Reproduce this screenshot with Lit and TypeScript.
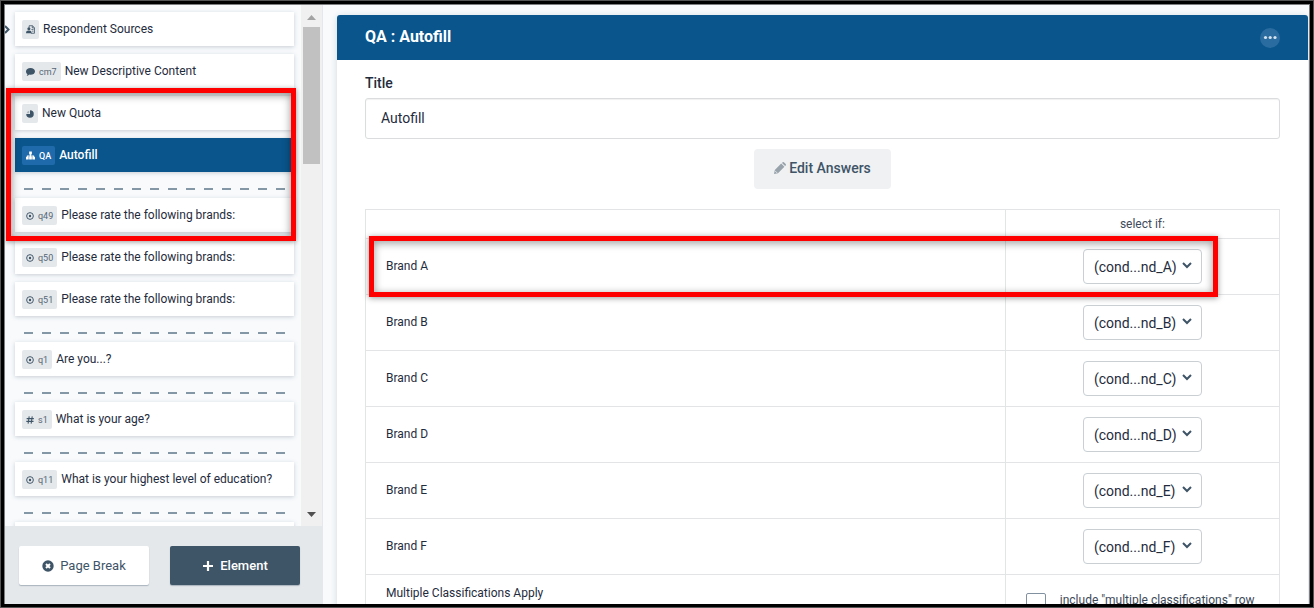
import { LitElement, html, css, svg, nothing } from "lit";
import { customElement } from "lit/decorators.js";

const icons: Record<string, unknown> = {
  sources: svg`<path fill="none" stroke="currentColor" stroke-width=".9" d="M3.500 3V.8h3.700l2.200 2.200v6.200H5.500M7 1v2.200h2.300"/><circle cx="3.200" cy="4.200" r="1.700"/><path d="M0 9.200c0-2.300 1-3 3.200-3s3 .7 3 3z"/><path d="M6 4.500h2.300v.9H6zM6.800 6.300h1.500v.9H6.800z"/>`,
  comment: svg`<path d="M5 1.200c2.800 0 5 1.600 5 3.700S7.800 8.600 5 8.600c-.5 0-1 0-1.400-.2C2.800 9.200 1.800 9.800.7 9.800c.6-.6.9-1.200.9-1.900C.6 7.200 0 6 0 4.900c0-2.100 2.200-3.700 5-3.700z"/>`,
  pie: svg`<path d="M5 5V.3A4.700 4.700 0 1 1 .3 5z"/><path d="M4 4V.9A4 4 0 0 0 .9 4z" opacity=".35"/>`,
  tree: svg`<path d="M3.500 .5h3v3.300h-1v1.200h3.500v1.500h1v3h-3v-3h.7V6H5.500v.5h1v3h-3v-3h1V6H2.200v.5H3v3H0v-3h1V5h3.500V3.800h-1z"/>`,
  target: svg`<circle cx="5" cy="5" r="4.200" fill="none" stroke="currentColor" stroke-width="1.200"/><circle cx="5" cy="5" r="1.500"/>`,
  hash: svg`<path fill="none" stroke="currentColor" stroke-width="1.300" d="M4 .5L2.600 9.500M7.800 .5L6.400 9.500M.8 3.300h9M.4 6.700h9"/>`,
};

const wideIcons = ["sources", "comment", "tree"];

interface Item {
  icon: string;
  code?: string;
  text: string;
  active?: boolean;
}

const pageBreak = html`<li class="break" role="separator"></li>`;

const card = (i: Item) => html`
  <li class="card ${i.active ? "active" : ""}">
    <span class="badge"
      ><svg class="ico ${wideIcons.includes(i.icon) ? "big" : ""}" viewBox="0 0 10 10" aria-hidden="true">
        ${icons[i.icon]}</svg
      >${i.code ? html`<span class="code">${i.code}</span>` : nothing}</span
    >
    <span>${i.text}</span>
  </li>
`;

const rate = "Please rate the following brands:";

@customElement("survey-outline")
class SurveyOutline extends LitElement {
  static styles = css`
    :host {
      display: flex;
      flex-direction: column;
      box-sizing: border-box;
      min-height: 0;
      position: relative;
      border-right: 1px solid #e4e8eb;
      background: #f8fafc;
    }
    .scroll {
      flex: 1;
      min-height: 0;
      display: flex;
    }
    .list,
    .group {
      display: flex;
      flex-direction: column;
      gap: 8px;
      list-style: none;
      margin: 0;
      padding: 0;
    }
    .list {
      flex: 1;
      overflow: hidden;
      padding: 7px 7px 0 10px;
    }
    .group {
      position: relative;
      z-index: 1;
    }
    .mark {
      position: absolute;
      inset: -8px -2px -9px -9px;
      border: 5px solid #f00;
      box-shadow: 0 1px 5px rgba(0, 0, 0, 0.4), inset 0 2px 8px rgba(0, 0, 0, 0.45);
      pointer-events: none;
    }
    .card {
      flex: none;
      box-sizing: border-box;
      height: 34px;
      display: flex;
      align-items: center;
      gap: 4px;
      padding: 0 7px;
      background: #fff;
      box-shadow: 0 1px 4px rgba(62, 84, 103, 0.25);
      font-size: 12px;
      color: #1f2c3d;
    }
    .badge {
      display: flex;
      align-items: center;
      gap: 4px;
      height: 19px;
      padding: 0 4px;
      margin-top: 1px;
      border-radius: 2px;
      background: #e4e8eb;
      color: #3e5467;
    }
    .code {
      font-size: 9px;
      color: #566675;
    }
    .ico {
      width: 8px;
      height: 8px;
      fill: currentColor;
    }
    .big {
      width: 9px;
      height: 9px;
    }
    .active {
      background: #09558c;
      color: #fff;
      font-weight: 500;
    }
    .active .badge {
      background: #1f6aab;
    }
    .active .badge,
    .active .code {
      color: #fff;
    }
    .break {
      flex: none;
      height: 2px;
      margin: 8px 9px 0;
      background: repeating-linear-gradient(90deg, #8497a6 0 9px, transparent 9px 18px);
    }
    .bar {
      width: 17px;
      padding: 0 2px;
      display: flex;
      flex-direction: column;
      align-items: center;
      background: #f0f0f0;
    }
    .bar svg {
      width: 9px;
      height: 5px;
      margin: 10px 0 7px;
    }
    .bar .down {
      margin: 0 0 9px;
    }
    .thumb {
      width: 17px;
      height: 137px;
      background: #c1c1c1;
    }
    .rest {
      flex: 1;
    }
    .foot {
      display: flex;
      gap: 21px;
      padding: 20px 22px 19px 14px;
      background: #e4e8eb;
    }
    button {
      flex: 1;
      height: 39px;
      display: flex;
      align-items: center;
      justify-content: center;
      gap: 6px;
      padding: 0;
      border: 0;
      border-radius: 2px;
      box-shadow: 0 1px 1px rgba(62, 84, 103, 0.35);
      background: #fff;
      color: #3e5467;
      font: 13px Roboto, sans-serif;
    }
    button svg {
      width: 12px;
      height: 12px;
    }
    .dark {
      background: #3e5467;
      color: #fff;
      font-weight: 500;
    }
    .expand {
      position: absolute;
      left: 0;
      top: 20px;
      width: 5px;
      height: 9px;
    }
  `;

  render() {
    return html`
      <svg class="expand" viewBox="0 0 5 9" aria-hidden="true">
        <path d="M0 1l3.500 3.500L0 8" fill="none" stroke="#3e5467" stroke-width="2" />
      </svg>
      <div class="scroll">
        <ul class="list">
          ${card({ icon: "sources", text: "Respondent Sources" })}
          ${card({ icon: "comment", code: "cm7", text: "New Descriptive Content" })}
          <li>
            <ul class="group">
              ${card({ icon: "pie", text: "New Quota" })}
              ${card({ icon: "tree", code: "QA", text: "Autofill", active: true })} ${pageBreak}
              ${card({ icon: "target", code: "q49", text: rate })}
              <li class="mark" role="presentation"></li>
            </ul>
          </li>
          ${card({ icon: "target", code: "q50", text: rate })}
          ${card({ icon: "target", code: "q51", text: rate })} ${pageBreak}
          ${card({ icon: "target", code: "q1", text: "Are you...?" })} ${pageBreak}
          ${card({ icon: "hash", code: "s1", text: "What is your age?" })} ${pageBreak}
          ${card({ icon: "target", code: "q11", text: "What is your highest level of education?" })}
          ${pageBreak}
          <li class="card"></li>
        </ul>
        <div class="bar" aria-hidden="true">
          <svg viewBox="0 0 9 5"><path d="M0 5L4.500 0 9 5z" fill="#a3a3a3" /></svg>
          <div class="thumb"></div>
          <div class="rest"></div>
          <svg class="down" viewBox="0 0 9 5"><path d="M0 0l4.500 5L9 0z" fill="#505050" /></svg>
        </div>
      </div>
      <div class="foot">
        <button type="button">
          <svg viewBox="0 0 12 12" aria-hidden="true">
            <circle cx="6" cy="6" r="5.700" fill="#3e5467" />
            <path d="M4 4l4 4M8 4L4 8" stroke="#fff" stroke-width="2" />
          </svg>
          Page Break
        </button>
        <button type="button" class="dark">
          <svg viewBox="0 0 12 12" aria-hidden="true">
            <path d="M6 1v10M1 6h10" stroke="#fff" stroke-width="2.200" />
          </svg>
          Element
        </button>
      </div>
    `;
  }
}

@customElement("autofill-editor")
class AutofillEditor extends LitElement {
  static styles = css`
    :host {
      display: block;
      box-sizing: border-box;
      min-width: 0;
      overflow: hidden;
      padding: 10px 1px 0 14px;
      background: #f8fafc;
    }
    .panel {
      background: #fff;
      border-radius: 4px 4px 0 0;
      box-shadow: 0 1px 6px rgba(62, 84, 103, 0.2);
    }
    header {
      height: 45px;
      display: flex;
      align-items: center;
      justify-content: space-between;
      padding: 0 28px;
      border-radius: 3px 3px 0 0;
      background: #09558c;
      color: #fff;
    }
    h1 {
      margin: 0;
      padding-bottom: 2px;
      font-size: 16px;
      font-weight: 700;
    }
    .more {
      width: 20px;
      height: 20px;
      padding: 0;
      border: 0;
      border-radius: 50%;
      background: #2a6ca0;
    }
    .more svg {
      display: block;
      width: 20px;
      height: 20px;
    }
    .body {
      display: flex;
      flex-direction: column;
      padding: 14px 28px;
    }
    .label {
      font-size: 14px;
      font-weight: 500;
      line-height: 18px;
      color: #1f2c3d;
    }
    .title {
      box-sizing: border-box;
      width: 100%;
      height: 41px;
      margin: 6px 0 10px;
      padding: 0 15px 2px;
      border: 1px solid #dadcde;
      border-radius: 3px;
      box-shadow: inset 0 1px 1px rgba(0, 0, 0, 0.06);
      background: #fff;
      color: #1f2c3d;
      font: 14px Roboto, sans-serif;
    }
    .edit {
      align-self: center;
      height: 40px;
      display: flex;
      align-items: center;
      gap: 3px;
      margin-bottom: 20px;
      padding: 0 20px 2px;
      border: 0;
      border-radius: 4px;
      background: #f0f1f3;
      color: #3e5467;
      font: 500 14px Roboto, sans-serif;
    }
    .edit svg {
      width: 12px;
      height: 12px;
    }
    table {
      width: 100%;
      table-layout: fixed;
      border-collapse: collapse;
      font-size: 12px;
      color: #1f2c3d;
    }
    th,
    td {
      box-sizing: border-box;
      border: 1px solid #e2e4e6;
      font-weight: 400;
    }
    th {
      height: 29px;
      padding: 0;
      text-align: center;
      color: #3e4a59;
    }
    td,
    .name {
      height: 56px;
      padding: 0 20px;
      text-align: left;
      color: #1f2c3d;
    }
    .name {
      padding-bottom: 2px;
    }
    .wide {
      width: 70%;
    }
    .on {
      position: relative;
    }
    .mark {
      position: absolute;
      z-index: 1;
      inset: -3px 62px -2px 3px;
      border: 5px solid #f00;
      box-shadow: 0 1px 6px rgba(0, 0, 0, 0.4), inset 0 2px 8px rgba(0, 0, 0, 0.4);
      pointer-events: none;
    }
    .pick {
      width: 119px;
      margin: 0 auto;
      display: grid;
      align-items: center;
    }
    .pick select,
    .pick svg {
      grid-area: 1 / 1;
    }
    select {
      appearance: none;
      width: 100%;
      height: 35px;
      padding: 0 10px;
      border: 1px solid #c9cfd3;
      border-radius: 4px;
      background: #fff;
      color: #1f2c3d;
      font: 14px Roboto, sans-serif;
    }
    .pick svg {
      justify-self: end;
      width: 10px;
      height: 8px;
      margin: 0 10px 4px 0;
      pointer-events: none;
    }
    .last td,
    .last .name {
      vertical-align: top;
      padding-top: 11px;
    }
    .check {
      display: flex;
      align-items: flex-start;
      gap: 14px;
      margin-top: 7px;
      color: #3e4a59;
      white-space: nowrap;
    }
    .check input {
      appearance: none;
      flex: none;
      width: 20px;
      height: 20px;
      margin: 0;
      border: 1px solid #8291a0;
      border-radius: 2px;
      background: #fff;
    }
  `;

  render() {
    return html`
      <section class="panel">
        <header>
          <h1>QA : Autofill</h1>
          <button class="more" type="button" aria-label="More options">
            <svg viewBox="0 0 20 20" fill="#d5e3ee" aria-hidden="true">
              <circle cx="5.500" cy="9.500" r="1.600" />
              <circle cx="10.200" cy="9.500" r="1.600" />
              <circle cx="15" cy="9.500" r="1.600" />
            </svg>
          </button>
        </header>
        <div class="body">
          <label class="label" for="title">Title</label>
          <input class="title" id="title" type="text" value="Autofill" />
          <button class="edit" type="button">
            <svg viewBox="0 0 12 12" fill="#98a2ab" aria-hidden="true">
              <path
                d="M0 12l.8-4L7.200 1.600l3.200 3.200L4 11.200zM8 .9l.6-.6q.7-.5 1.300 0l1.800 1.800q.5.600 0 1.300l-.6.600z"
              />
              <path d="M1 8.800l2.200 2.200" stroke="#f0f1f3" stroke-width=".8" />
            </svg>
            Edit Answers
          </button>
          <table>
            <thead>
              <tr>
                <th class="wide"></th>
                <th scope="col">select if:</th>
              </tr>
            </thead>
            <tbody>
              ${["A", "B", "C", "D", "E", "F"].map(
                (b) => html`
                  <tr class=${b === "A" ? "on" : ""}>
                    <th class="name" scope="row" id="brand-${b}">Brand ${b}</th>
                    <td>
                      <div class="pick">
                        <select aria-labelledby="brand-${b}">
                          <option>(cond...nd_${b})</option>
                        </select>
                        <svg viewBox="0 0 10 8" aria-hidden="true">
                          <path d="M1 2l4 4 4-4" fill="none" stroke="#3e5467" stroke-width="2" />
                        </svg>
                      </div>
                      ${b === "A" ? html`<div class="mark"></div>` : nothing}
                    </td>
                  </tr>
                `
              )}
              <tr class="last">
                <th class="name" scope="row">Multiple Classifications Apply</th>
                <td>
                  <label class="check">
                    <input type="checkbox" />
                    <span>include "multiple classifications" row</span>
                  </label>
                </td>
              </tr>
            </tbody>
          </table>
        </div>
      </section>
    `;
  }
}

@customElement("app-root")
class AppRoot extends LitElement {
  static styles = css`
    :host {
      display: grid;
      grid-template-columns: 318px minmax(0, 1fr);
      grid-template-rows: minmax(0, 1fr);
      box-sizing: border-box;
      height: 100vh;
      overflow: hidden;
      border: 4px solid #000;
      outline: 1px solid #555;
      outline-offset: -1px;
      padding: 1px 1px 0 1px;
      background: #7c7e80;
      font-family: Roboto, sans-serif;
    }
  `;

  render() {
    return html`
      <survey-outline></survey-outline>
      <autofill-editor></autofill-editor>
    `;
  }
}
